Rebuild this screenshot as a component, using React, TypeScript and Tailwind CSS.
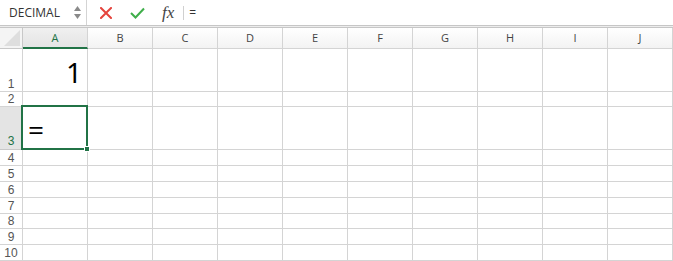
import React from "react";

const cols = ["A", "B", "C", "D", "E", "F", "G", "H", "I", "J"];

const rows: { n: number; h: string }[] = [
  { n: 1, h: "h-[43px]" },
  { n: 2, h: "h-[15px]" },
  { n: 3, h: "h-[43px]" },
  { n: 4, h: "h-[16px]" },
  { n: 5, h: "h-[16px]" },
  { n: 6, h: "h-[16px]" },
  { n: 7, h: "h-[16px]" },
  { n: 8, h: "h-[15px]" },
  { n: 9, h: "h-[16px]" },
  { n: 10, h: "h-[16px]" },
];

function FormulaBar() {
  return (
    <div className="flex h-[25px] items-stretch bg-white">
      {/* Name box */}
      <div className="flex w-[87px] shrink-0 items-center border-r border-[#d4d4d4] pl-[9px] pr-[5px]">
        <span className="flex-1 text-[12px] text-[#333]">DECIMAL</span>
        <div className="flex flex-col items-center gap-[3px]">
          <svg width="7" height="5" viewBox="0 0 7 5">
            <path d="M3.5 0 L7 5 L0 5 Z" fill="#8a8a8a" />
          </svg>
          <svg width="7" height="5" viewBox="0 0 7 5">
            <path d="M0 0 L7 0 L3.5 5 Z" fill="#8a8a8a" />
          </svg>
        </div>
      </div>

      <div className="flex items-center pl-[13px]">
        {/* Cancel */}
        <svg width="12" height="12" viewBox="0 0 12 12" className="mr-[18px]">
          <path d="M1 1 L11 11 M11 1 L1 11" stroke="#e5443d" strokeWidth="2" strokeLinecap="square" />
        </svg>
        {/* Enter */}
        <svg width="15" height="12" viewBox="0 0 15 12" className="mr-[17px]">
          <path d="M1 6 L5.5 10.5 L14 1.5" stroke="#3fae4a" strokeWidth="2" fill="none" />
        </svg>
        <span
          className="mr-[9px] text-[17px] italic leading-none text-[#444]"
          style={{ fontFamily: '"Liberation Serif", serif' }}
        >
          fx
        </span>
        <div className="h-[14px] w-px bg-[#d0d0d0]" />
        <span className="pl-[5px] text-[12px] text-[#333]">=</span>
      </div>
    </div>
  );
}

function HeaderRow() {
  return (
    <div className="flex h-[21px]">
      <div className="relative w-[23px] shrink-0 border-r border-b border-[#c8c8c8] bg-[#f4f4f4]">
        <svg width="16" height="16" viewBox="0 0 16 16" className="absolute right-[2px] bottom-[2px]">
          <path d="M16 0 L16 16 L0 16 Z" fill="#dedede" />
        </svg>
      </div>
      {cols.map((c) => (
        <div
          key={c}
          className={
            c === "A"
              ? "flex w-[65px] shrink-0 items-center justify-center border-r border-b-2 border-r-[#d4d4d4] border-b-[#217346] bg-gradient-to-b from-[#f0f0f0] to-[#e4e4e4] pt-[2px] text-[11px] font-medium text-[#217346]"
              : "flex w-[65px] shrink-0 items-center justify-center border-r border-b border-[#d4d4d4] bg-gradient-to-b from-white to-[#f3f3f3] text-[11px] text-[#444]"
          }
        >
          {c}
        </div>
      ))}
    </div>
  );
}

function Cell({ row, col }: { row: number; col: string }) {
  if (row === 1 && col === "A") {
    return (
      <div className="flex w-[65px] shrink-0 items-end justify-end border-r border-b border-[#d4d4d4] pr-[5px] pb-[2px]">
        <span className="text-[28px] leading-[34px] text-black" style={{ fontFamily: '"Noto Sans", sans-serif' }}>
          1
        </span>
      </div>
    );
  }
  if (row === 3 && col === "A") {
    return (
      <div className="relative flex w-[65px] shrink-0 items-end border-r border-b border-[#d4d4d4] pl-[5px] pb-[3px]">
        <span className="text-[28px] font-medium leading-[34px] text-black">=</span>
        <div className="absolute -top-[2px] -left-[2px] -right-[1px] -bottom-[1px] border-2 border-[#217346]" />
        <div className="absolute -right-[3px] -bottom-[3px] h-[6px] w-[6px] border border-white bg-[#217346]" />
      </div>
    );
  }
  return <div className="w-[65px] shrink-0 border-r border-b border-[#d4d4d4]" />;
}

export default function App() {
  return (
    <div
      className="h-[261px] w-[673px] overflow-hidden bg-white"
      style={{ fontFamily: '"Open Sans", "Noto Sans", sans-serif' }}
    >
      <FormulaBar />
      <div className="h-[3px] border-y border-[#c6c6c6] bg-[#ececec]" />
      <HeaderRow />
      {rows.map((r) => (
        <div key={r.n} className={`flex ${r.h}`}>
          <div
            className={
              r.n === 3
                ? "flex w-[23px] shrink-0 items-end justify-center border-r border-b border-[#c8c8c8] bg-[#e4e4e4] pb-px text-[12px] leading-[13px] text-[#217346]"
                : "flex w-[23px] shrink-0 items-end justify-center border-r border-b border-[#d4d4d4] bg-white text-[12px] leading-[13px] text-[#555]"
            }
            style={{ fontFamily: '"Liberation Sans", Arial, sans-serif' }}
          >
            {r.n}
          </div>
          {cols.map((c) => (
            <Cell key={c} row={r.n} col={c} />
          ))}
        </div>
      ))}
    </div>
  );
}
